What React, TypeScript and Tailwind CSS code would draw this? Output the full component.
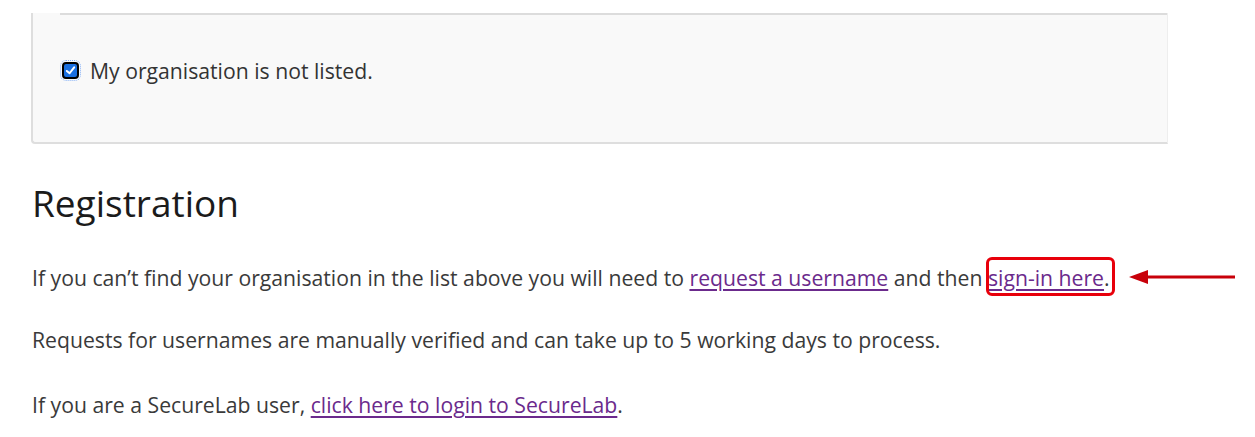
import React from "react";

const font = { fontFamily: '"Open Sans", "Noto Sans", sans-serif' };

function CheckBox() {
  return (
    <span className="relative inline-flex h-[17px] w-[17px] shrink-0 items-center justify-center rounded-[4px] border-[2.5px] border-black bg-[#1a6fe0] outline-1 outline-dotted outline-offset-1 outline-[#8ab4f8]">
      <svg viewBox="0 0 12 12" className="h-[11px] w-[11px]">
        <path d="M2 6.5 L5 9 L10 2.5" fill="none" stroke="white" strokeWidth="2.2" strokeLinecap="round" strokeLinejoin="round" />
      </svg>
    </span>
  );
}

export default function App() {
  return (
    <div className="h-[437px] w-[1255px] overflow-hidden bg-white text-[#333]" style={font}>
      <div className="pt-[13px] pl-[31px] w-[1168px]">
        <div className="h-[131px] rounded-bl-[4px] border-b-2 border-l-2 border-r border-[#dedede] border-r-[#eeeeee] bg-[#f9f9f9]">
          <div className="ml-[27px] border-t-2 border-[#dcdcdc]" />
          <label className="mt-[40px] ml-[29px] flex items-center gap-[11px] text-[21.2px] text-[#333]">
            <CheckBox />
            <span>My organisation is not listed.</span>
          </label>
        </div>
      </div>

      <div className="px-[32px]">
        <h2 className="mt-[35px] text-[37px] leading-[48px] font-normal text-[#1b1b1b]">Registration</h2>

        <p className="mt-[36px] text-[21.2px] leading-[30px] text-[#3a3a3a]">
          If you can’t find your organisation in the list above you will need to{" "}
          <a className="text-[#6b2a8c] underline underline-offset-[3px]" href="#">request a username</a> and then{" "}
          <span className="relative">
            <a className="text-[#6b2a8c] underline underline-offset-[3px]" href="#">sign-in here</a>.
            <span className="pointer-events-none absolute left-[-2px] right-[-5px] top-[-6px] bottom-[-4px] rounded-[6px] border-[3px] border-[#e8000b]" />
            <svg className="absolute top-[4px] overflow-visible" width="106" height="20" viewBox="0 0 106 20" style={{ left: "calc(100% + 19px)" }}>
              <path d="M0 10 L19 3 L19 17 Z" fill="#c8000a" />
              <rect x="18" y="8.5" width="88" height="3" fill="#c8000a" />
            </svg>
          </span>
        </p>

        <p className="mt-[32px] text-[21.2px] leading-[30px] text-[#3a3a3a]">
          Requests for usernames are manually verified and can take up to 5 working days to process.
        </p>

        <p className="mt-[35px] text-[21.2px] leading-[30px] text-[#3a3a3a]">
          If you are a SecureLab user,{" "}
          <a className="text-[#6b2a8c] underline underline-offset-[3px]" href="#">click here to login to SecureLab</a>.
        </p>
      </div>
    </div>
  );
}
